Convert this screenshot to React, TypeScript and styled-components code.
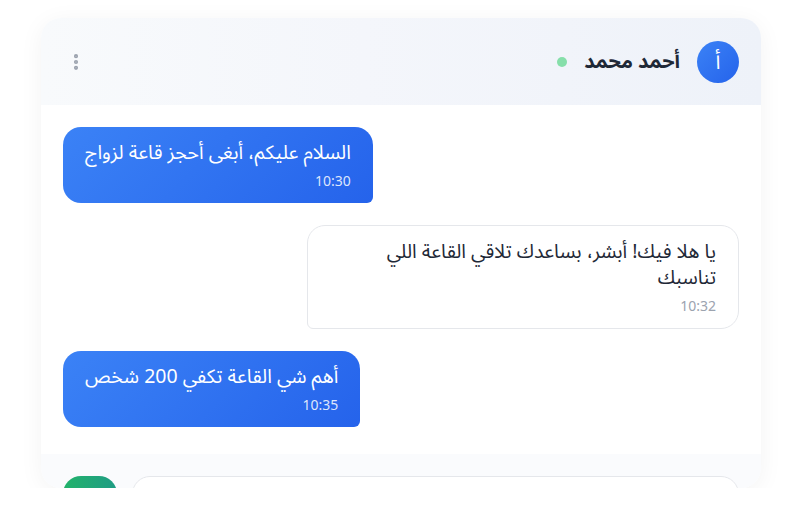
import { createGlobalStyle } from "styled-components";
import styled from "styled-components";
import { MoreVertical } from "lucide-react";

const messages: ChatMessage[] = [
  { id: 1, mine: true, text: "السلام عليكم، أبغى أحجز قاعة لزواج", time: "10:30" },
  { id: 2, mine: false, text: "يا هلا فيك! أبشر، بساعدك تلاقي القاعة اللي تناسبك", time: "10:32" },
  { id: 3, mine: true, text: "أهم شي القاعة تكفي 200 شخص", time: "10:35" },
];

export default function App() {
  return (
    <>
      <GlobalStyle />
      <Card>
        <Header>
          <Contact>
            <Avatar>أ</Avatar>
            <Name>أحمد محمد</Name>
            <OnlineDot />
          </Contact>
          <MenuButton>
            <MoreVertical size={20} strokeWidth={3} />
          </MenuButton>
        </Header>

        <Messages>
          {messages.map((msg) => (
            <Bubble key={msg.id} $mine={msg.mine}>
              <Text>{msg.text}</Text>
              <Time $mine={msg.mine}>{msg.time}</Time>
            </Bubble>
          ))}
        </Messages>

        <Composer>
          <Input />
          <SendButton />
        </Composer>
      </Card>
    </>
  );
}

const GlobalStyle = createGlobalStyle`
  body {
    margin: 0;
    background: #ffffff;
    font-family: "Noto Sans Arabic", "Noto Sans", "DejaVu Sans", sans-serif;
  }
`;

const Card = styled.div`
  direction: rtl;
  width: 720px;
  height: 470px;
  margin: 18px auto 0;
  border-radius: 20px;
  overflow: hidden;
  background: #ffffff;
  box-shadow: 0 4px 24px rgba(15, 23, 42, 0.05);
  display: flex;
  flex-direction: column;
`;

const Header = styled.div`
  flex-shrink: 0;
  height: 87px;
  box-sizing: border-box;
  padding: 0 22px;
  display: flex;
  align-items: center;
  justify-content: space-between;
  background: linear-gradient(270deg, #eef2f9 0%, #f4f6fb 55%, #f8fafc 100%);
`;

const Contact = styled.div`
  display: flex;
  align-items: center;
  gap: 17px;
`;

const Avatar = styled.div`
  width: 42px;
  height: 42px;
  border-radius: 50%;
  background: linear-gradient(135deg, #3b82f6, #2563eb);
  color: #ffffff;
  font-size: 21px;
  display: flex;
  align-items: center;
  justify-content: center;
`;

const Name = styled.span`
  font-size: 20px;
  font-weight: 700;
  color: #1f2937;
`;

const OnlineDot = styled.span`
  width: 10px;
  height: 10px;
  border-radius: 50%;
  background: #86dfaa;
`;

const MenuButton = styled.button`
  width: 26px;
  height: 32px;
  padding: 0;
  border: none;
  background: none;
  color: #9ca3af;
  display: flex;
  align-items: center;
  justify-content: center;
`;

const Messages = styled.div`
  flex-shrink: 0;
  padding: 22px 22px 0;
  display: flex;
  flex-direction: column;
  align-items: flex-start;
  gap: 22px;
`;

const Bubble = styled.div<{ $mine: boolean }>`
  align-self: ${({ $mine }) => ($mine ? "flex-end" : "flex-start")};
  max-width: 432px;
  box-sizing: border-box;
  padding: 13px 22px 13px;
  border-radius: 18px;
  ${({ $mine }) =>
    $mine
      ? `
    background: linear-gradient(135deg, #3b82f6, #2563eb);
    color: #ffffff;
    border-bottom-right-radius: 6px;
  `
      : `
    background: #ffffff;
    color: #1f2937;
    border: 1px solid #e5e7eb;
    border-bottom-left-radius: 6px;
  `}
`;

const Text = styled.div`
  font-size: 19.5px;
  line-height: 26px;
`;

const Time = styled.div<{ $mine: boolean }>`
  margin-top: 6px;
  font-family: "Noto Sans", sans-serif;
  font-size: 14px;
  line-height: 18px;
  color: ${({ $mine }) => ($mine ? "rgba(255, 255, 255, 0.85)" : "#9ca3af")};
`;

const Composer = styled.div`
  flex-shrink: 0;
  margin-top: 27px;
  padding: 22px;
  display: flex;
  gap: 15px;
  background: #fafbfd;
`;

const Input = styled.div`
  flex: 1;
  height: 54px;
  box-sizing: border-box;
  border: 1px solid #e5e7eb;
  border-radius: 18px;
  background: #ffffff;
`;

const SendButton = styled.button`
  width: 54px;
  height: 54px;
  border: none;
  border-radius: 18px;
  background: linear-gradient(90deg, #22b36b, #1f9c84);
`;

interface ChatMessage {
  id: number;
  mine: boolean;
  text: string;
  time: string;
}
